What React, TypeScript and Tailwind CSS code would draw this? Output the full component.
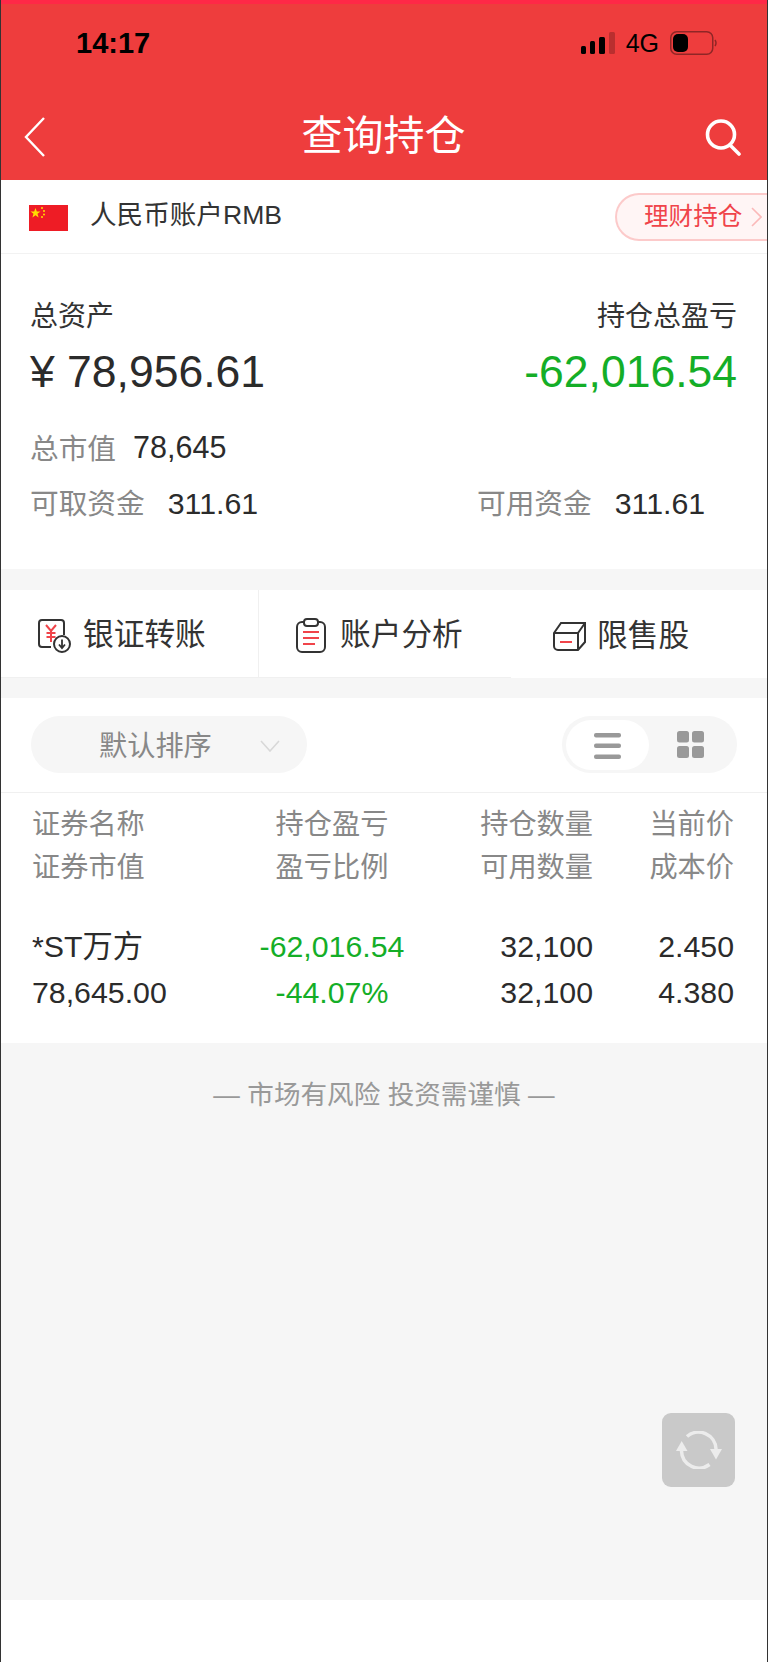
import React from 'react';

const greenText = 'text-[#14ae27]';

function StatusBar() {
  return (
    <div className="flex h-[78px] items-center justify-between pl-[75px] pr-[50px]">
      <span className="text-[29px] font-bold text-black leading-none">14:17</span>
      <div className="flex items-center">
        <svg width="34" height="22" viewBox="0 0 34 22">
          <rect x="0" y="14" width="5" height="8" rx="1.5" fill="#000" />
          <rect x="9" y="9" width="5" height="13" rx="1.5" fill="#000" />
          <rect x="18" y="5" width="6" height="17" rx="1.5" fill="#000" />
          <rect x="28" y="0" width="6" height="22" rx="1.5" fill="#b92f2f" />
        </svg>
        <span className="ml-[11px] text-[25px] font-medium text-black leading-none">4G</span>
        <svg className="ml-[11px]" width="47" height="24" viewBox="0 0 47 24">
          <rect x="0.75" y="0.75" width="42" height="22.5" rx="6" fill="none" stroke="#8f2626" strokeWidth="1.5" />
          <rect x="3" y="3" width="15" height="18" rx="5" fill="#000" />
          <path d="M45 9 q2 3 0 6" fill="none" stroke="#8f2626" strokeWidth="1.5" />
        </svg>
      </div>
    </div>
  );
}

function NavBar() {
  return (
    <div className="grid h-[98px] grid-cols-[1fr_auto_1fr] items-center pt-[11px] pl-[23px] pr-[26px]">
      <svg width="21" height="40" viewBox="0 0 21 40" fill="none" stroke="#fff" strokeWidth="2.4">
        <path d="M20 1 L2 20 L20 39" />
      </svg>
      <span className="ml-[2px] text-[41px] text-white leading-none">查询持仓</span>
      <svg className="justify-self-end" width="36" height="38" viewBox="0 0 36 38" fill="none" stroke="#fff" strokeWidth="3.6">
        <circle cx="16" cy="16.5" r="13.5" />
        <path d="M25 27 L34 36" strokeLinecap="round" />
      </svg>
    </div>
  );
}

function Flag() {
  return (
    <svg className="mt-[2px]" width="39" height="26" viewBox="0 0 39 26">
      <rect width="39" height="26" fill="#ee1c25" />
      <polygon points="6.5,3 7.8,6.6 11.5,6.6 8.5,8.8 9.6,12.4 6.5,10.2 3.4,12.4 4.5,8.8 1.5,6.6 5.2,6.6" fill="#ffde00" />
      <circle cx="13" cy="3" r="1" fill="#ffde00" />
      <circle cx="15" cy="6" r="1" fill="#ffde00" />
      <circle cx="15" cy="9.5" r="1" fill="#ffde00" />
      <circle cx="13" cy="12" r="1" fill="#ffde00" />
    </svg>
  );
}

function AccountRow() {
  return (
    <div className="flex h-[74px] items-center justify-between border-b border-[#f2f2f2] pl-[28px]">
      <div className="flex items-center">
        <Flag />
        <span className="ml-[22px] mb-[3px] text-[26.6px] text-[#333] leading-none">人民币账户RMB</span>
      </div>
      <div className="flex h-[48px] w-[152px] items-center rounded-l-[24px] border-y-2 border-l-2 border-[#fccaca] bg-[#fff5f5] pl-[27px] mt-[1px]">
        <span className="text-[24.6px] text-[#f0444a] leading-none">理财持仓</span>
        <svg className="ml-[9px]" width="11" height="20" viewBox="0 0 11 20" fill="none" stroke="#fbb9b9" strokeWidth="1.6">
          <path d="M1 1 L10 10 L1 19" />
        </svg>
      </div>
    </div>
  );
}

function Summary() {
  return (
    <div className="h-[315px] bg-white pl-[29px] pr-[30px] pt-[41px]">
      <div className="flex h-[40px] items-center justify-between text-[28px] text-[#333]">
        <span className="mt-[4px]">总资产</span>
        <span className="mt-[4px]">持仓总盈亏</span>
      </div>
      <div className="mt-[9px] flex h-[56px] items-center justify-between text-[44.5px] leading-none">
        <span className="text-[#2b2b2b]">¥ 78,956.61</span>
        <span className={greenText}>-62,016.54</span>
      </div>
      <div className="mt-[28px] flex h-[40px] items-center">
        <span className="mt-[4px] text-[28.7px] text-[#888]">总市值</span>
        <span className="ml-[17px] text-[30.5px] text-[#2b2b2b]">78,645</span>
      </div>
      <div className="mt-[16px] flex h-[40px] items-center">
        <div className="flex w-[447px] items-center">
          <span className="mt-[2px] text-[28.7px] text-[#888]">可取资金</span>
          <span className="ml-[23px] text-[30.3px] text-[#2b2b2b]">311.61</span>
        </div>
        <span className="mt-[2px] text-[28.7px] text-[#888]">可用资金</span>
        <span className="ml-[23px] text-[30.3px] text-[#2b2b2b]">311.61</span>
      </div>
    </div>
  );
}

function TransferIcon() {
  return (
    <svg width="33" height="34" viewBox="0 0 33 34" fill="none">
      <path d="M13 28 H4 a3 3 0 0 1 -3 -3 V4 a3 3 0 0 1 3 -3 H23 a3 3 0 0 1 3 3 V16" stroke="#333" strokeWidth="2" />
      <path d="M8 6 L13 12 L18 6 M13 12 V23 M8.5 14 H17.5 M8.5 18 H17.5" stroke="#f0444a" strokeWidth="2" />
      <circle cx="24" cy="25" r="8" stroke="#333" strokeWidth="2" fill="#fff" />
      <path d="M24 20.5 V28 M21 25.5 L24 29 L27 25.5" stroke="#333" strokeWidth="1.8" />
    </svg>
  );
}

function ClipboardIcon() {
  return (
    <svg width="30" height="35" viewBox="0 0 30 35" fill="none">
      <rect x="1" y="4" width="28" height="30" rx="5" stroke="#333" strokeWidth="2" />
      <rect x="8" y="1" width="14" height="7" rx="3" stroke="#333" strokeWidth="2" fill="#fff" />
      <path d="M7 14 H23 M7 20 H23 M7 26 H19" stroke="#f0444a" strokeWidth="2.2" />
    </svg>
  );
}

function BoxIcon() {
  return (
    <svg width="33" height="29" viewBox="0 0 33 29" fill="none" stroke="#333" strokeWidth="2">
      <path d="M1 11 L8 1 H32 V20 L25 28 H5 a4 4 0 0 1 -4 -4 Z" />
      <path d="M1 11 H25 V28 M25 11 L32 1" />
      <path d="M7 20 H19" stroke="#f0444a" />
    </svg>
  );
}

function QuickTabs() {
  return (
    <div className="flex h-[88px] bg-white">
      <div className="flex w-[258px] items-center border-r border-b border-[#f0f0f0] pl-[37px] pt-[4px] text-[30.7px] text-[#333]">
        <TransferIcon />
        <span className="ml-[12px] leading-none">银证转账</span>
      </div>
      <div className="flex w-[252px] items-center border-b border-[#f0f0f0] pl-[37px] pt-[4px] text-[30.7px] text-[#333]">
        <ClipboardIcon />
        <span className="ml-[14px] leading-none">账户分析</span>
      </div>
      <div className="flex flex-1 items-center pl-[42px] pt-[4px] text-[30.7px] text-[#333]">
        <BoxIcon />
        <span className="ml-[11px] leading-none">限售股</span>
      </div>
    </div>
  );
}

function SortBar() {
  return (
    <div className="flex h-[95px] items-start justify-between border-b border-[#f0f0f0] bg-white pl-[30px] pr-[30px] pt-[18px]">
      <div className="flex h-[57px] w-[276px] items-center rounded-full bg-[#f6f6f6] pl-[68px]">
        <span className="mt-[4px] text-[28.2px] text-[#888] leading-none">默认排序</span>
        <svg className="ml-[48px] mt-[2px]" width="20" height="12" viewBox="0 0 20 12" fill="none" stroke="#d8d8d8" strokeWidth="1.6">
          <path d="M1 1 L10 11 L19 1" />
        </svg>
      </div>
      <div className="flex h-[57px] w-[175px] items-center rounded-full bg-[#f6f6f6] pl-[4px]">
        <div className="flex h-[50px] w-[83px] items-center justify-center rounded-full bg-white">
          <svg className="mt-[2px]" width="27" height="26" viewBox="0 0 27 26" fill="#999">
            <rect width="27" height="4.5" rx="2" />
            <rect y="10.5" width="27" height="4.5" rx="2" />
            <rect y="21.5" width="27" height="4.5" rx="2" />
          </svg>
        </div>
        <svg className="ml-[28px]" width="27" height="27" viewBox="0 0 27 27" fill="#999">
          <rect width="12" height="11.5" rx="2.5" />
          <rect x="15" width="12" height="11.5" rx="2.5" />
          <rect y="15" width="12" height="12" rx="2.5" />
          <rect x="15" y="15" width="12" height="12" rx="2.5" />
        </svg>
      </div>
    </div>
  );
}

const headerRows = [
  ['证券名称', '持仓盈亏', '持仓数量', '当前价'],
  ['证券市值', '盈亏比例', '可用数量', '成本价'],
];

const dataRows = [
  ['*ST万方', '-62,016.54', '32,100', '2.450'],
  ['78,645.00', '-44.07%', '32,100', '4.380'],
];

function HoldingsTable() {
  return (
    <div className="bg-white pl-[31px]">
      <div className="pt-[10px]">
        {headerRows.map((row) => (
          <div key={row[0]} className="grid h-[43px] grid-cols-[168px_264px_129px_141px] items-center text-[28.2px] text-[#888]">
            <span>{row[0]}</span>
            <span className="text-center">{row[1]}</span>
            <span className="text-right">{row[2]}</span>
            <span className="text-right">{row[3]}</span>
          </div>
        ))}
      </div>
      <div className="pt-[35px] pb-[27px]">
        {dataRows.map((row) => (
          <div key={row[0]} className="grid h-[46px] grid-cols-[168px_264px_129px_141px] items-center text-[30.3px] text-[#2b2b2b]">
            <span>{row[0]}</span>
            <span className={`text-center ${greenText}`}>{row[1]}</span>
            <span className="text-right">{row[2]}</span>
            <span className="text-right">{row[3]}</span>
          </div>
        ))}
      </div>
    </div>
  );
}

function RefreshButton() {
  return (
    <button className="absolute right-[32px] top-[370px] flex h-[74px] w-[73px] items-center justify-center rounded-[9px] bg-[#c9c9c9]">
      <svg width="46" height="38" viewBox="0 0 46 38" fill="none" stroke="#ececec" strokeWidth="3.5">
        <path d="M11 5.5 A17.5 17.5 0 0 1 40 18" />
        <path d="M33.5 33.5 A17.5 17.5 0 0 1 5.5 20" />
        <path d="M34 18 H46 L40 28.5 Z" fill="#ececec" stroke="none" />
        <path d="M0 20 H11.5 L5.7 10 Z" fill="#ececec" stroke="none" />
      </svg>
    </button>
  );
}

export default function App() {
  return (
    <div className="h-[1662px] w-[768px] overflow-hidden border-x border-[#333] bg-white font-['Liberation_Sans','Noto_Sans_CJK_SC',sans-serif]">
      <div className="h-[180px] bg-[#ee3d3d]">
        <div className="h-[4px] bg-[#ff2847]" />
        <StatusBar />
        <NavBar />
      </div>
      <AccountRow />
      <Summary />
      <div className="h-[21px] bg-[#f6f6f6]" />
      <QuickTabs />
      <div className="h-[20px] bg-[#f6f6f6]" />
      <SortBar />
      <HoldingsTable />
      {/* grey area below the list */}
      <div className="relative h-[557px] bg-[#f6f6f6] pt-[33px] text-center">
        <span className="text-[26.6px] leading-[38px] text-[#999]">— 市场有风险 投资需谨慎 —</span>
        <RefreshButton />
      </div>
    </div>
  );
}
